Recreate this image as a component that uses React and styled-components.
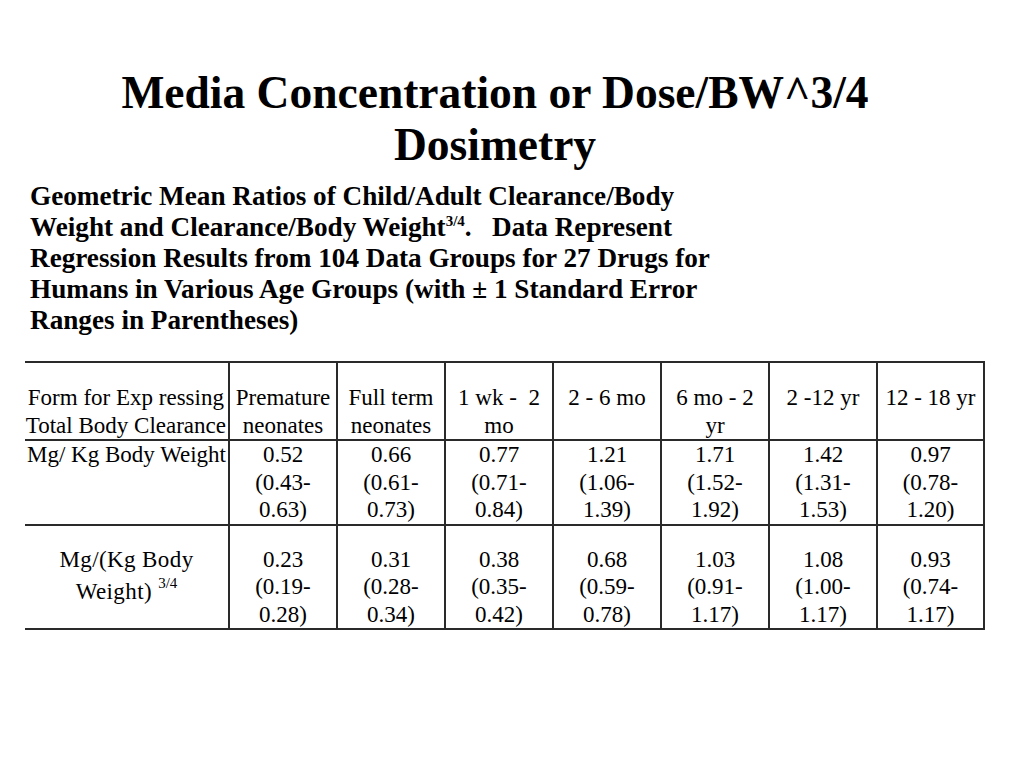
import React from "react";
import styled, { createGlobalStyle } from "styled-components";

const Global = createGlobalStyle`
  html, body { margin: 0; padding: 0; background: #ffffff; }
  body { font-family: "Liberation Serif", "Times New Roman", serif; color: #000; }
`;

const Page = styled.div`
  width: 1024px;
  height: 768px;
  box-sizing: border-box;
  padding-top: 67px;
  display: flex;
  flex-direction: column;
  overflow: hidden;
`;

const Title = styled.h1`
  margin: 0;
  width: 990px;
  text-align: center;
  font-size: 45.5px;
  line-height: 52px;
  font-weight: bold;
`;

const Caption = styled.p`
  margin: 10px 0 0 30px;
  font-size: 27.2px;
  line-height: 31px;
  font-weight: bold;
  white-space: nowrap;
`;

const CapSup = styled.sup`
  font-size: 15px;
  line-height: 0;
  vertical-align: 10px;
`;

const Table = styled.table`
  margin: 25px 0 0 25px;
  border-collapse: collapse;
  table-layout: fixed;
  width: 959px;
  font-size: 23px;
  line-height: 27.5px;
`;

const Cell = styled.td`
  padding: ${(p) => (p.$pad ? `${p.$pad}px 0 0 0` : "0")};
  border-top: 2px solid #2a2a2a;
  border-bottom: 2px solid #2a2a2a;
  border-left: ${(p) => (p.$first ? "none" : "2px solid #2a2a2a")};
  border-right: 2px solid #2a2a2a;
  text-align: center;
  vertical-align: top;
  overflow: hidden;
  white-space: nowrap;
`;

const LabelCell = styled(Cell)`
  text-align: right;
  padding-right: 2px;
`;

const MiddleLabelCell = styled(Cell)`
  vertical-align: middle;
  line-height: 32px;
  letter-spacing: 0.4px;
  padding-bottom: 1px;
`;

const LabelBlock = styled.span`
  display: inline-block;
  text-align: center;
  white-space: nowrap;
`;

const Sup = styled.sup`
  font-size: 15px;
  line-height: 0;
  vertical-align: 11px;
  letter-spacing: 0;
`;

const Col = styled.col`
  width: ${(p) => p.$w}px;
`;

const headers = [
  ["Premature", "neonates"],
  ["Full term", "neonates"],
  ["1 wk -\u00a0\u00a02", "mo"],
  ["2 - 6 mo"],
  ["6 mo - 2", "yr"],
  ["2 -12 yr"],
  ["12 - 18 yr"],
];

const row1 = [
  ["0.52", "(0.43-", "0.63)"],
  ["0.66", "(0.61-", "0.73)"],
  ["0.77", "(0.71-", "0.84)"],
  ["1.21", "(1.06-", "1.39)"],
  ["1.71", "(1.52-", "1.92)"],
  ["1.42", "(1.31-", "1.53)"],
  ["0.97", "(0.78-", "1.20)"],
];

const row2 = [
  ["0.23", "(0.19-", "0.28)"],
  ["0.31", "(0.28-", "0.34)"],
  ["0.38", "(0.35-", "0.42)"],
  ["0.68", "(0.59-", "0.78)"],
  ["1.03", "(0.91-", "1.17)"],
  ["1.08", "(1.00-", "1.17)"],
  ["0.93", "(0.74-", "1.17)"],
];

const Lines = ({ lines }) =>
  lines.map((l, i) => (
    <React.Fragment key={i}>
      {i > 0 && <br />}
      {l}
    </React.Fragment>
  ));

export default function App() {
  return (
    <>
      <Global />
      <Page>
        <Title>
          Media Concentration or Dose/BW^3/4
          <br />
          Dosimetry
        </Title>
        <Caption>
          Geometric Mean Ratios of Child/Adult Clearance/Body
          <br />
          Weight and Clearance/Body Weight<CapSup>3/4</CapSup>.{"\u00a0\u00a0\u00a0"}Data Represent
          <br />
          Regression Results from 104 Data Groups for 27 Drugs for
          <br />
          Humans in Various Age Groups (with ± 1 Standard Error
          <br />
          Ranges in Parentheses)
        </Caption>
        <Table>
          <colgroup>
            <Col $w={204} />
            {[0, 1, 2, 3, 4, 5].map((i) => (
              <Col key={i} $w={108} />
            ))}
            <Col $w={107} />
          </colgroup>
          <tbody>
            <tr>
              <LabelCell $first $pad={21}>
                <LabelBlock>
                  Form for Exp ressing
                  <br />
                  Total Body Clearance
                </LabelBlock>
              </LabelCell>
              {headers.map((h, i) => (
                <Cell key={i} $pad={21}>
                  <Lines lines={h} />
                </Cell>
              ))}
            </tr>
            <tr>
              <LabelCell $first>
                <LabelBlock>Mg/ Kg Body Weight</LabelBlock>
              </LabelCell>
              {row1.map((v, i) => (
                <Cell key={i}>
                  <Lines lines={v} />
                </Cell>
              ))}
            </tr>
            <tr>
              <MiddleLabelCell $first>
                Mg/(Kg Body
                <br />
                Weight) <Sup>3/4</Sup>
              </MiddleLabelCell>
              {row2.map((v, i) => (
                <Cell key={i} $pad={20}>
                  <Lines lines={v} />
                </Cell>
              ))}
            </tr>
          </tbody>
        </Table>
      </Page>
    </>
  );
}
